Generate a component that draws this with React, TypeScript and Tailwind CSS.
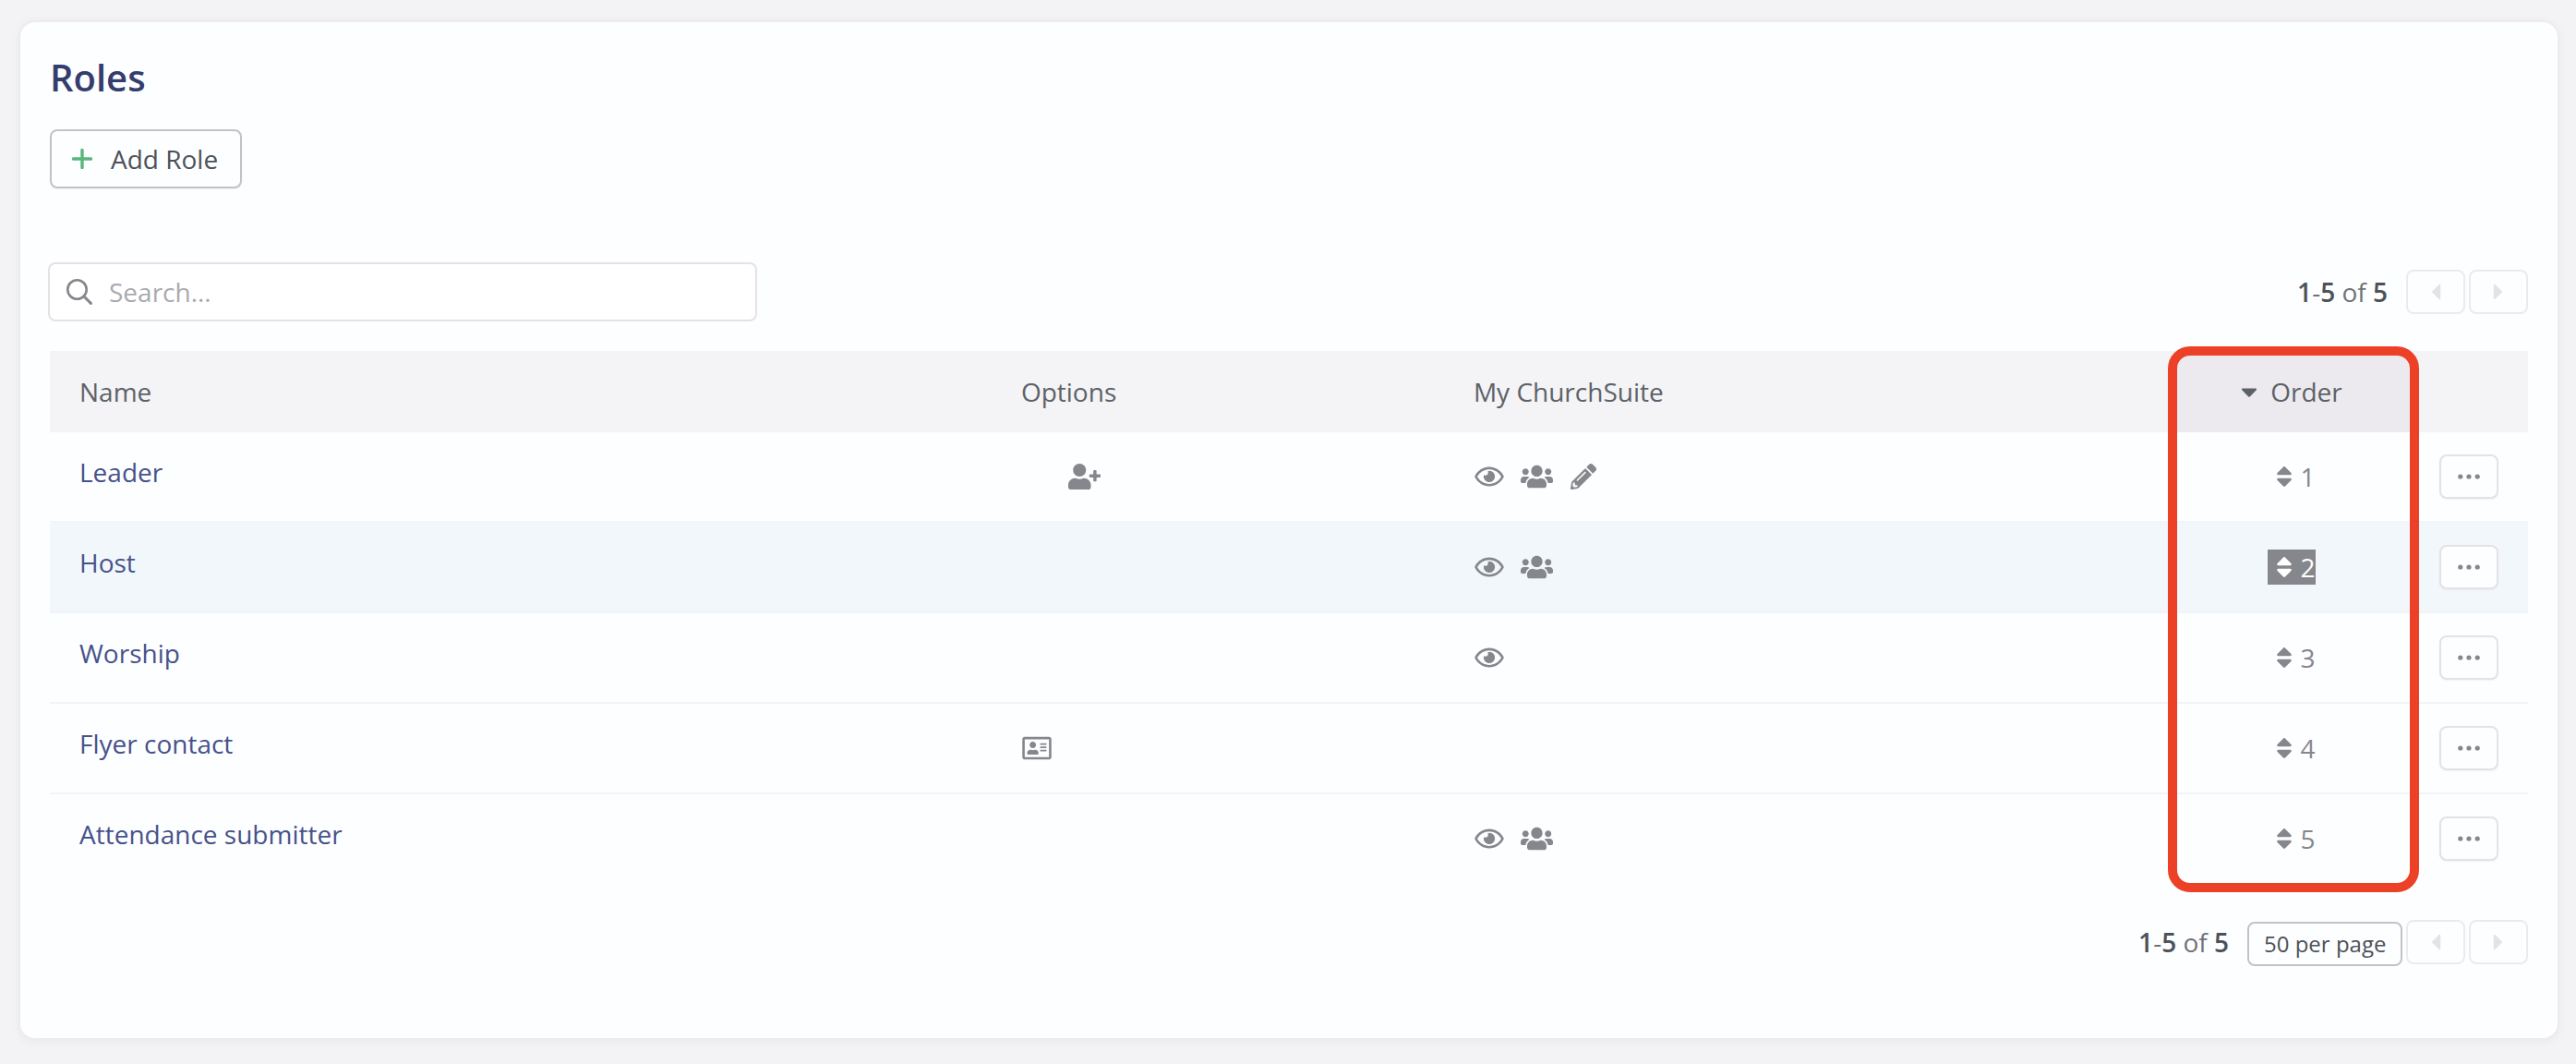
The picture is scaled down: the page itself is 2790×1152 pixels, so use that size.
import { ReactNode, useState } from 'react';
import {
  FaCaretDown,
  FaCaretLeft,
  FaCaretRight,
  FaPencilAlt,
  FaRegAddressCard,
  FaRegEye,
  FaSort,
  FaUserPlus,
  FaUsers,
} from 'react-icons/fa';

interface Role {
  id: number;
  name: string;
  isContact?: boolean;
  canAddMembers?: boolean;
  canView?: boolean;
  canSeeMembers?: boolean;
  canEdit?: boolean;
}

const ROLES: Role[] = [
  { id: 1, name: 'Leader', canAddMembers: true, canView: true, canSeeMembers: true, canEdit: true },
  { id: 2, name: 'Host', canView: true, canSeeMembers: true },
  { id: 3, name: 'Worship', canView: true },
  { id: 4, name: 'Flyer contact', isContact: true },
  { id: 5, name: 'Attendance submitter', canView: true, canSeeMembers: true },
];

const PlusIcon = () => (
  <svg viewBox="0 0 22 22" className="size-[22px] text-[#58b57c]" aria-hidden="true">
    <path d="M11 1.5v19M1.5 11h19" stroke="currentColor" strokeWidth="3.4" strokeLinecap="round" />
  </svg>
);

const SearchIcon = () => (
  <svg viewBox="0 0 28 28" className="size-7 text-[#85878c]" fill="none" stroke="currentColor" aria-hidden="true">
    <circle cx="11.5" cy="11.5" r="10.2" strokeWidth="2.6" />
    <path d="M19 19l7.4 7.4" strokeWidth="3" strokeLinecap="round" />
  </svg>
);

const DotsIcon = () => (
  <svg viewBox="0 0 24 6" className="h-[6px] w-6" fill="currentColor" aria-hidden="true">
    <circle cx="2.8" cy="3" r="2.6" />
    <circle cx="12" cy="3" r="2.6" />
    <circle cx="21.2" cy="3" r="2.6" />
  </svg>
);

// Fixed width slot so icons line up between rows, even when one is missing
const IconSlot = ({ children }: { children?: ReactNode }) => (
  <span className="flex w-[35px] justify-center">{children}</span>
);

const PagerButton = ({ label, children }: { label: string; children: ReactNode }) => (
  <button
    type="button"
    disabled
    aria-label={label}
    className="flex h-12 w-16 items-center justify-center rounded-lg border-2 border-[#edeaee] text-[#e5e2e6]"
  >
    {children}
  </button>
);

const Pager = ({ withPageSize = false }: { withPageSize?: boolean }) => (
  <div className="flex items-center gap-1">
    <div className="mr-4 text-[#6f7277]">
      <b className="font-semibold text-[#4d5258]">1</b>-<b className="font-semibold text-[#4d5258]">5</b> of{' '}
      <b className="font-semibold text-[#4d5258]">5</b>
    </div>
    {withPageSize && (
      <select
        aria-label="Results per page"
        className="mt-1 h-12 w-[168px] appearance-none rounded-lg border-2 border-[#c3c3c7] pl-4 text-[24px] leading-8 text-[#4d5258]"
      >
        <option>50 per page</option>
      </select>
    )}
    <PagerButton label="Previous page"><FaCaretLeft size={28} /></PagerButton>
    <PagerButton label="Next page"><FaCaretRight size={28} /></PagerButton>
  </div>
);

const RoleRow = ({ role, active }: { role: Role; active: boolean }) => (
  <tr className={`align-top *:border-b-2 *:border-[#f3f4f8] *:pt-6 *:pb-6 last:*:border-b-0 ${active ? 'bg-[#f2f7fb]' : ''}`}>
    <td className="px-8">
      <a href="#" className="text-[#47528a]">{role.name}</a>
    </td>
    <td className="px-8">
      <div className="flex h-12 items-center gap-4">
        <IconSlot>{role.isContact && <FaRegAddressCard size={28} className="w-8" />}</IconSlot>
        <IconSlot>{role.canAddMembers && <FaUserPlus size={28} className="w-[35px]" />}</IconSlot>
      </div>
    </td>
    <td className="px-8">
      <div className="flex h-12 items-center gap-4">
        <IconSlot>{role.canView && <FaRegEye size={28} className="w-8" />}</IconSlot>
        <IconSlot>{role.canSeeMembers && <FaUsers size={28} className="w-[35px]" />}</IconSlot>
        <IconSlot>{role.canEdit && <FaPencilAlt size={28} />}</IconSlot>
      </div>
    </td>
    <td>
      <div className="flex h-12 items-center justify-center">
        <span className={`flex items-center ${active ? 'bg-[#85878c] text-white' : ''}`}>
          <IconSlot><FaSort size={28} /></IconSlot>
          {role.id}
        </span>
      </div>
    </td>
    <td className="px-8">
      <button
        type="button"
        aria-label={`Actions for ${role.name}`}
        className="flex h-12 w-16 items-center justify-center rounded-lg border-2 border-[#e5e2e6] bg-[#fdfeff] shadow-xs"
      >
        <DotsIcon />
      </button>
    </td>
  </tr>
);

const App = () => {
  const [search, setSearch] = useState('');
  const activeId = 2;

  const roles = ROLES.filter(role => role.name.toLowerCase().includes(search.toLowerCase()));

  return (
    <div className="min-h-screen bg-[#f3f3f5] pt-6 pr-5 pb-7 pl-[22px] font-['Open_Sans','Noto_Sans',sans-serif] text-[28px] leading-[38px] text-[#85878c]">
      <main className="rounded-2xl bg-[#fdfeff] px-8 pt-8 pb-[78px] shadow-[0_0_0_2px_#edebee,0_2px_8px_2px_#e9e7eb]">
        <h1 className="text-[40px] leading-14 font-semibold text-[#343d6e]">Roles</h1>

        <button
          type="button"
          className="mt-7 flex h-16 items-center gap-5 rounded-lg border-2 border-[#c3c3c7] pr-6 pl-[22px] text-[#4d5258] shadow-xs"
        >
          <PlusIcon />
          Add Role
        </button>

        <div className="mt-20 flex items-center justify-between gap-8">
          <label className="-ml-[2px] flex h-16 w-[768px] items-center gap-[18px] rounded-lg border-2 border-[#e5e2e6] bg-white px-[18px]">
            <SearchIcon />
            <input
              type="text"
              aria-label="Search roles"
              placeholder="Search..."
              value={search}
              onChange={e => setSearch(e.target.value)}
              className="min-w-0 flex-1 outline-none placeholder:text-[#a9aab0]"
            />
          </label>
          <Pager />
        </div>

        <div className="relative mt-8">
          <table className="w-full table-fixed border-separate border-spacing-0">
            <thead>
              <tr className="h-[88px] bg-[#f4f3f6] text-left text-[#5c6268]">
                <th className="w-[38%] px-8 font-normal">Name</th>
                <th className="w-[490px] px-8 font-normal">Options</th>
                <th className="px-8 font-normal">My ChurchSuite</th>
                <th className="w-64 bg-[#edeaef] font-normal" aria-sort="ascending">
                  <span className="flex items-center justify-center gap-[14px]">
                    <FaCaretDown size={28} className="w-[18px]" />
                    Order
                  </span>
                </th>
                <th className="w-32" aria-label="Actions" />
              </tr>
            </thead>
            <tbody>
              {roles.map(role => (
                <RoleRow key={role.id} role={role} active={role.id === activeId} />
              ))}
            </tbody>
          </table>

          {/* Callout around the Order column */}
          <div className="pointer-events-none absolute -top-[5px] right-[118px] -bottom-[10px] w-[272px] rounded-3xl border-10 border-[#ec4027]" />
        </div>

        <div className="mt-[38px] flex justify-end">
          <Pager withPageSize />
        </div>
      </main>
    </div>
  );
};

export default App;
